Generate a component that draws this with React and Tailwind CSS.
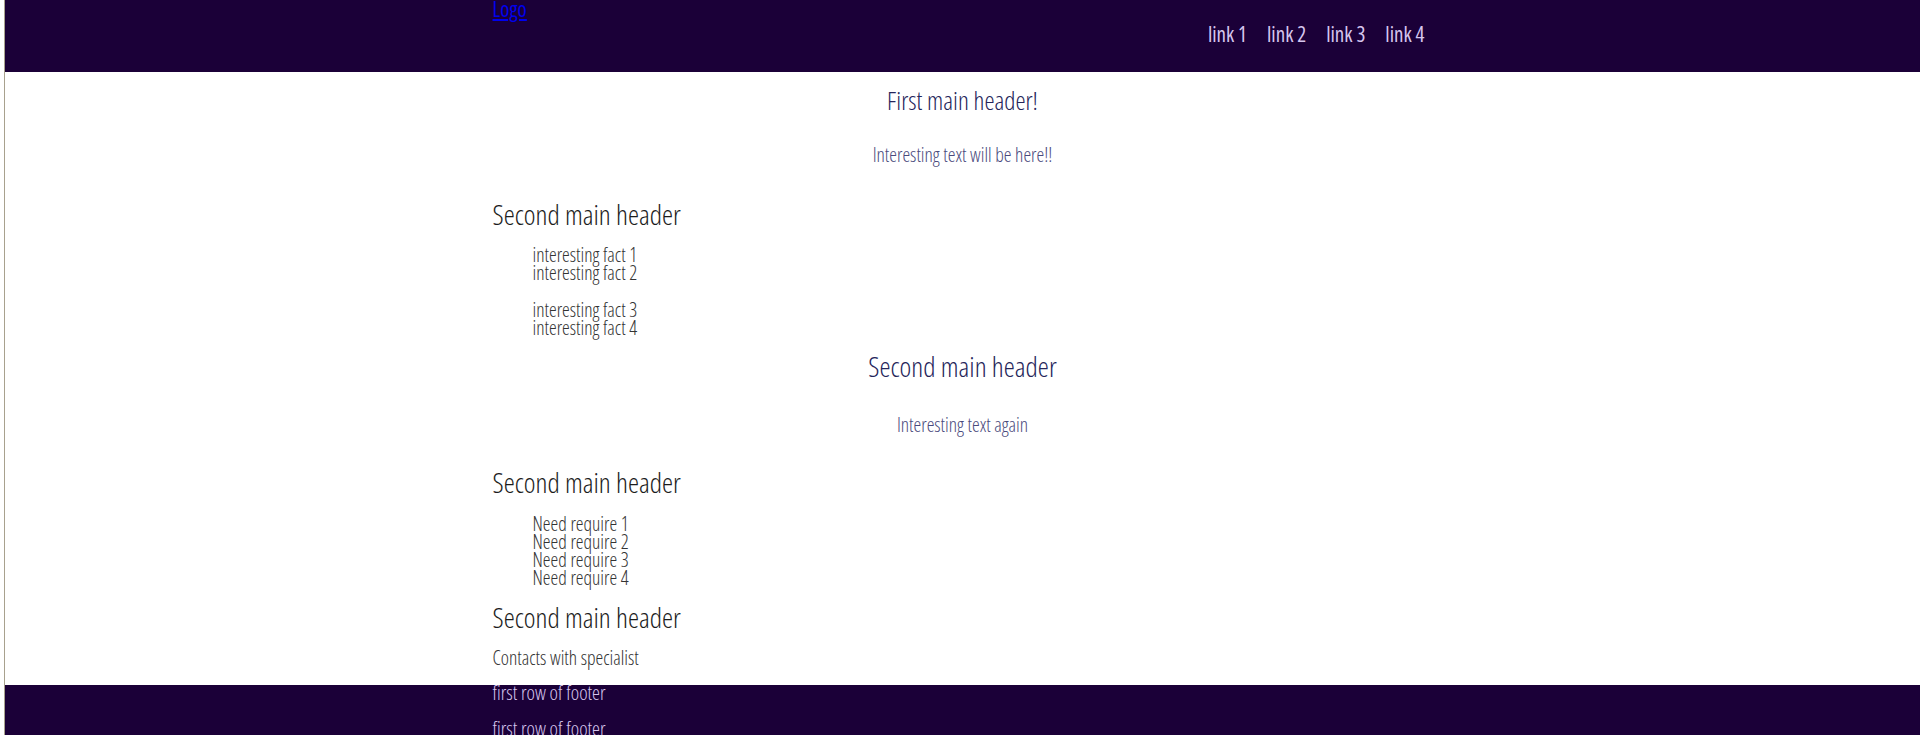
import React from 'react';

const font = "font-['Open_Sans','Liberation_Sans',sans-serif] font-light font-stretch-condensed";

export default function App() {
  return (
    <div className={`ml-1 border-l border-[#a8a18e] bg-white min-h-[735px] ${font}`}>
      <header className="bg-[#1b0038] h-[72px]">
        <div className="w-[940px] mx-auto">
          <a href="#" className="block text-[21px] leading-[18px] text-[#0000ee] underline font-normal">Logo</a>
          <nav className="flex justify-end gap-[20px] pr-[8px] mt-[4px] text-[21px] leading-6 font-normal text-[#d6c6ee]">
            <a href="#">link 1</a>
            <a href="#">link 2</a>
            <a href="#">link 3</a>
            <a href="#">link 4</a>
          </nav>
        </div>
      </header>

      <main className="w-[940px] mx-auto">
        <h1 className="mt-[12px] text-center text-[25.5px] leading-8 text-[#25255a]">First main header!</h1>
        <p className="mt-[27px] text-center text-[19.5px] leading-6 text-[#4a4a7c]">Interesting text will be here!!</p>

        <h2 className="mt-[29px] text-[28px] leading-9 text-[#1c1c1c]">Second main header</h2>
        <ul className="mt-[14px] pl-10 text-[19.5px] leading-[18px] text-[#333]">
          <li>interesting fact 1</li>
          <li>interesting fact 2</li>
        </ul>
        <ul className="mt-[19px] pl-10 text-[19.5px] leading-[18px] text-[#333]">
          <li>interesting fact 3</li>
          <li>interesting fact 4</li>
        </ul>

        <h2 className="mt-[11px] text-center text-[28px] leading-9 text-[#25255a]">Second main header</h2>
        <p className="mt-[29px] text-center text-[19.5px] leading-6 text-[#4a4a7c]">Interesting text again</p>

        <h2 className="mt-[27px] text-[28px] leading-9 text-[#1c1c1c]">Second main header</h2>
        <ul className="mt-[15px] pl-10 text-[19.5px] leading-[18px] text-[#333]">
          <li>Need require 1</li>
          <li>Need require 2</li>
          <li>Need require 3</li>
          <li>Need require 4</li>
        </ul>

        <h2 className="mt-[12px] text-[28px] leading-9 text-[#1c1c1c]">Second main header</h2>
        <p className="mt-[11px] text-[19.5px] leading-6 text-[#333]">Contacts with specialist</p>
      </main>

      <footer className="mt-[15px] bg-[#1b0038] h-[60px]">
        <div className="w-[940px] mx-auto text-[20px] leading-[16px] text-[#d6c6ee]">
          <p>first row of footer</p>
          <p className="mt-[20px]">first row of footer</p>
        </div>
      </footer>
    </div>
  );
}
